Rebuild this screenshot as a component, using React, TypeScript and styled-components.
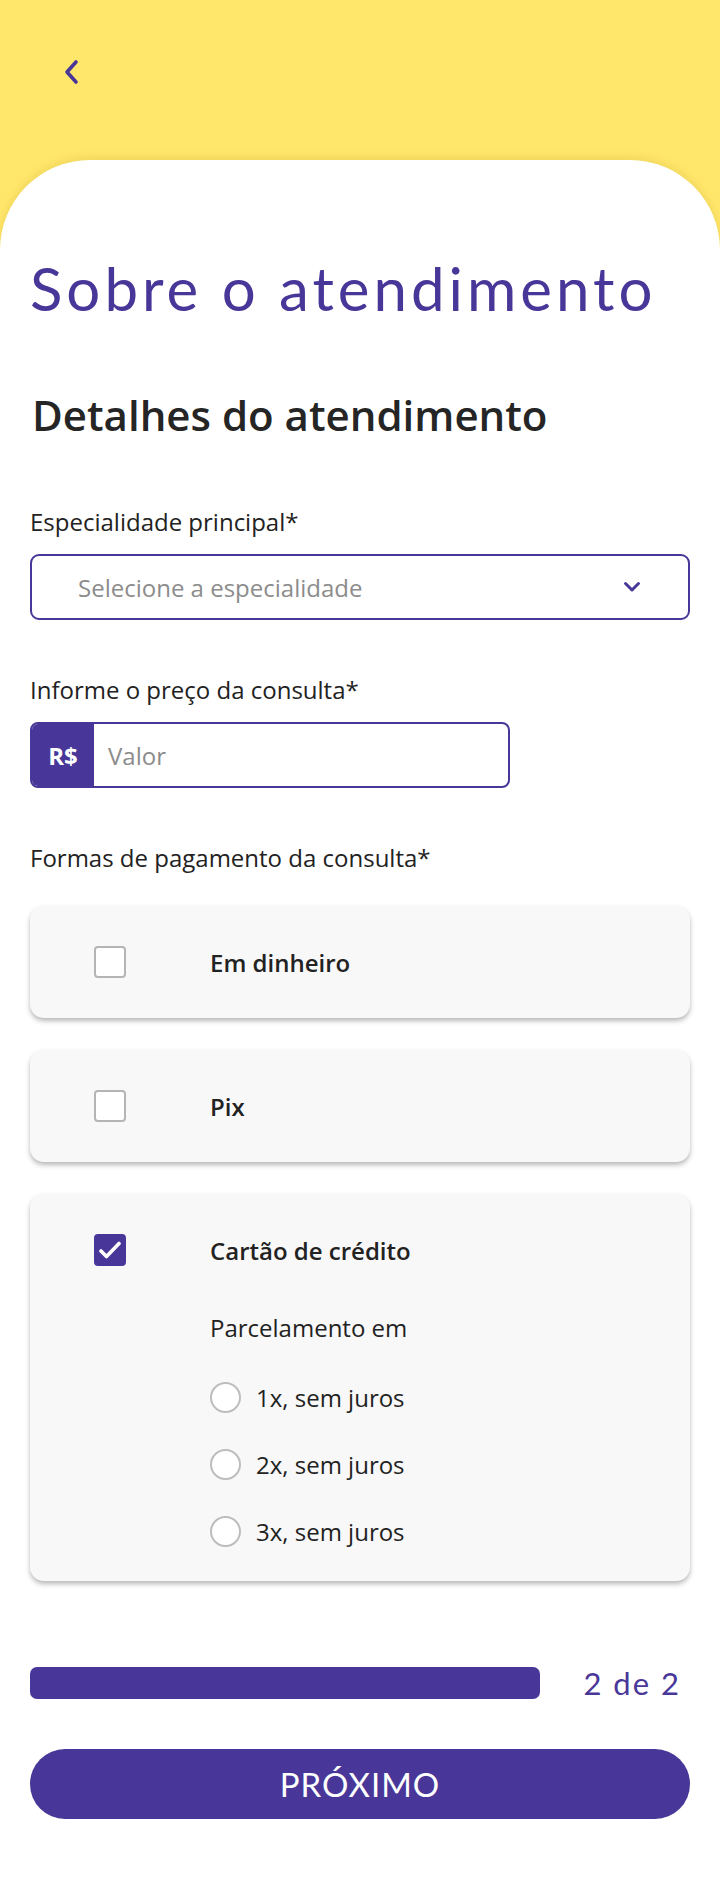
import React from "react";
import styled, { createGlobalStyle } from "styled-components";

const PURPLE = "#483798";

const Global = createGlobalStyle`
  * { box-sizing: border-box; }
  html, body { margin: 0; padding: 0; background: #ffffff; }
  body { font-family: "Open Sans", "Noto Sans", sans-serif; color: #222222; }
`;

const Page = styled.div`
  width: 720px;
  min-height: 1882px;
  background: #ffe76b;
  display: flex;
  flex-direction: column;
`;

const Header = styled.header`
  height: 160px;
  padding: 58px 0 0 62px;
`;

const BackButton = styled.button`
  width: 18px;
  height: 28px;
  border: 0;
  background: transparent;
  padding: 0;
  display: flex;
  align-items: center;
  justify-content: center;
  cursor: pointer;
`;

const Sheet = styled.main`
  flex: 1;
  background: #ffffff;
  border-radius: 90px 90px 0 0;
  box-shadow: 0 -2px 8px rgba(160, 130, 0, 0.18);
  padding: 90px 30px 60px;
  display: flex;
  flex-direction: column;
`;

const Title = styled.h1`
  margin: 0;
  font-family: "Lato", "Noto Sans", sans-serif;
  font-weight: 400;
  font-size: 60px;
  line-height: 76px;
  letter-spacing: 4px;
  color: ${PURPLE};
  white-space: nowrap;
`;

const Subtitle = styled.h2`
  margin: 61px 0 0 2px;
  font-weight: 600;
  font-size: 42px;
  line-height: 56px;
  color: #252525;
`;

const FieldLabel = styled.label<{ $top: number }>`
  display: block;
  font-size: 24px;
  line-height: 32px;
  color: #222222;
  margin-top: ${(p) => p.$top}px;
`;

const SelectBox = styled.div`
  margin-top: 16px;
  height: 66px;
  border: 2px solid ${PURPLE};
  border-radius: 9px;
  display: flex;
  align-items: center;
  padding: 0 47px 0 46px;
  justify-content: space-between;
`;

const Placeholder = styled.span`
  font-size: 24px;
  color: #8c8c8c;
`;

const PriceField = styled.div`
  margin-top: 16px;
  width: 480px;
  height: 66px;
  border: 2px solid ${PURPLE};
  border-radius: 8px;
  display: flex;
  overflow: hidden;
`;

const Currency = styled.div`
  width: 62px;
  background: ${PURPLE};
  color: #ffffff;
  font-weight: 700;
  font-size: 24px;
  display: flex;
  align-items: center;
  justify-content: center;
`;

const PriceInput = styled.div`
  flex: 1;
  display: flex;
  align-items: center;
  padding-left: 14px;
`;

const OptionList = styled.div`
  margin-top: 32px;
  display: flex;
  flex-direction: column;
  gap: 32px;
`;

const OptionCard = styled.div<{ $bottom: number }>`
  background: #f8f8f8;
  border-radius: 14px;
  box-shadow: 0 3px 5px rgba(0, 0, 0, 0.28);
  padding: 40px 0 ${(p) => p.$bottom}px 64px;
`;

const OptionRow = styled.div`
  display: flex;
  align-items: center;
  height: 32px;
`;

const Checkbox = styled.span<{ $checked?: boolean }>`
  width: 32px;
  height: 32px;
  border-radius: 4px;
  border: 2px solid ${(p) => (p.$checked ? PURPLE : "#b4b4b4")};
  background: ${(p) => (p.$checked ? PURPLE : "#ffffff")};
  display: flex;
  align-items: center;
  justify-content: center;
  flex-shrink: 0;
`;

const OptionText = styled.span`
  margin-left: 84px;
  font-size: 24px;
  font-weight: 600;
  color: #222222;
`;

const Installments = styled.div`
  margin-left: 116px;
  margin-top: 46px;
  display: flex;
  flex-direction: column;
`;

const InstallmentsLabel = styled.div`
  font-size: 24px;
  line-height: 32px;
  color: #222222;
`;

const RadioRow = styled.label<{ $top: number }>`
  display: flex;
  align-items: center;
  height: 32px;
  margin-top: ${(p) => p.$top}px;
  font-size: 24px;
  color: #222222;
`;

const Radio = styled.span`
  width: 31px;
  height: 31px;
  border-radius: 50%;
  border: 2px solid #bdbdbd;
  background: #ffffff;
  margin-right: 15px;
  flex-shrink: 0;
`;

const ProgressRow = styled.div`
  margin-top: 83px;
  display: flex;
  align-items: center;
  justify-content: space-between;
`;

const ProgressTrack = styled.div`
  width: 510px;
  height: 32px;
  border-radius: 7px;
  background: ${PURPLE};
`;

const StepText = styled.span`
  font-family: "Lato", "Noto Sans", sans-serif;
  font-size: 31px;
  letter-spacing: 2px;
  color: ${PURPLE};
  margin-right: 9px;
`;

const NextButton = styled.button`
  margin-top: 47px;
  height: 70px;
  border: 0;
  border-radius: 35px;
  background: ${PURPLE};
  color: #ffffff;
  font-family: "Lato", "Noto Sans", sans-serif;
  font-size: 33px;
  letter-spacing: 1px;
  cursor: pointer;
`;

const options = [
  { label: "Em dinheiro", checked: false },
  { label: "Pix", checked: false },
  { label: "Cartão de crédito", checked: true },
];

const radios = ["1x, sem juros", "2x, sem juros", "3x, sem juros"];

export default function App() {
  return (
    <>
      <Global />
      <Page>
        <Header>
          <BackButton aria-label="Voltar">
            <svg width="18" height="26" viewBox="0 0 18 26">
              <polyline
                points="14,3 5,13 14,23"
                fill="none"
                stroke={PURPLE}
                strokeWidth="3.6"
                strokeLinecap="round"
                strokeLinejoin="round"
              />
            </svg>
          </BackButton>
        </Header>
        <Sheet>
          <Title>Sobre o atendimento</Title>
          <Subtitle>Detalhes do atendimento</Subtitle>

          <FieldLabel $top={63}>Especialidade principal*</FieldLabel>
          <SelectBox>
            <Placeholder>Selecione a especialidade</Placeholder>
            <svg width="18" height="12" viewBox="0 0 18 12">
              <polyline
                points="2.5,2.5 9,9 15.5,2.5"
                fill="none"
                stroke={PURPLE}
                strokeWidth="3"
                strokeLinecap="round"
                strokeLinejoin="round"
              />
            </svg>
          </SelectBox>

          <FieldLabel $top={54}>Informe o preço da consulta*</FieldLabel>
          <PriceField>
            <Currency>R$</Currency>
            <PriceInput>
              <Placeholder>Valor</Placeholder>
            </PriceInput>
          </PriceField>

          <FieldLabel $top={54}>Formas de pagamento da consulta*</FieldLabel>

          <OptionList>
            {options.map((o) => (
              <OptionCard key={o.label} $bottom={o.checked ? 34 : 40}>
                <OptionRow>
                  <Checkbox $checked={o.checked}>
                    {o.checked && (
                      <svg width="24" height="18" viewBox="0 0 24 18">
                        <polyline
                          points="3,10 8.5,15.5 21,2.5"
                          fill="none"
                          stroke="#ffffff"
                          strokeWidth="3.6"
                          strokeLinecap="round"
                          strokeLinejoin="round"
                        />
                      </svg>
                    )}
                  </Checkbox>
                  <OptionText>{o.label}</OptionText>
                </OptionRow>
                {o.checked && (
                  <Installments>
                    <InstallmentsLabel>Parcelamento em</InstallmentsLabel>
                    {radios.map((r, i) => (
                      <RadioRow key={r} $top={i === 0 ? 37 : 35}>
                        <Radio />
                        {r}
                      </RadioRow>
                    ))}
                  </Installments>
                )}
              </OptionCard>
            ))}
          </OptionList>

          <ProgressRow>
            <ProgressTrack />
            <StepText>2 de 2</StepText>
          </ProgressRow>
          <NextButton>PRÓXIMO</NextButton>
        </Sheet>
      </Page>
    </>
  );
}
